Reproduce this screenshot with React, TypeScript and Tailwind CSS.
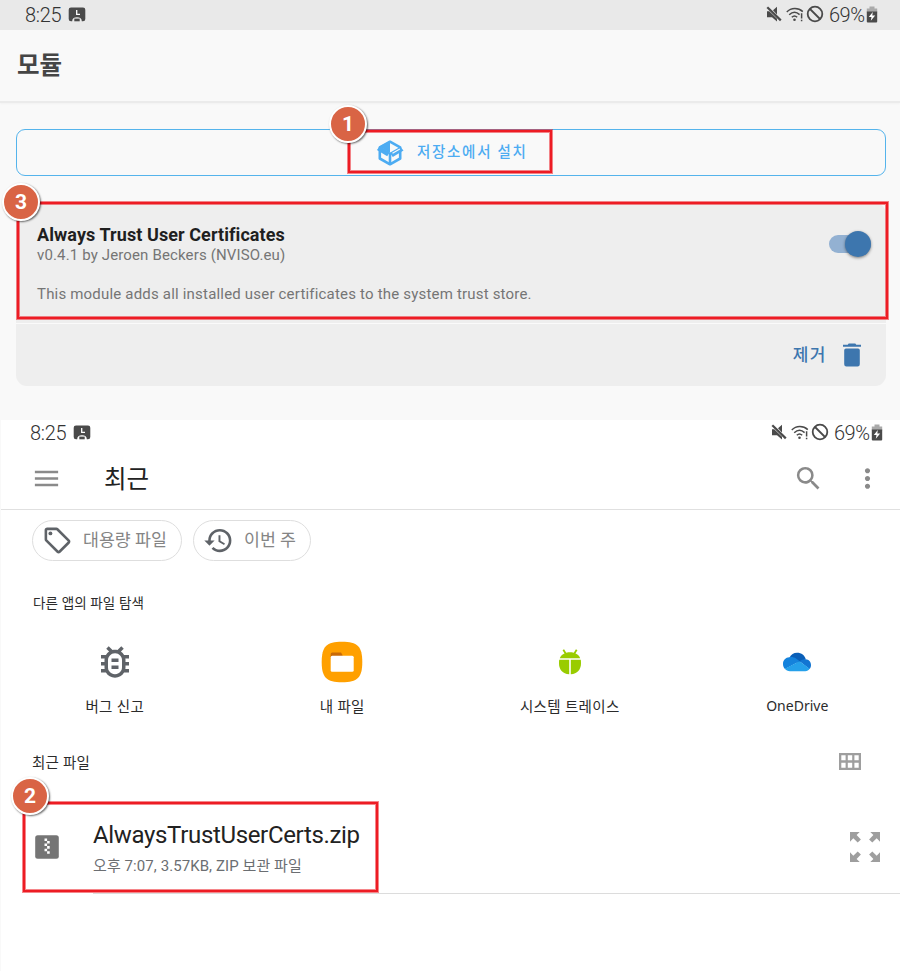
import type { ReactNode } from "react";
import {
  MdHistory,
  MdMenu,
  MdMoreVert,
  MdOutlineBugReport,
  MdOutlineSell,
  MdSearch,
} from "react-icons/md";

function StatusBar({ className }: { className: string }) {
  return (
    <div className={`flex h-[30px] items-center text-[20px] leading-[30px] font-light text-[#333] ${className}`}>
      <span className="w-[43px] tracking-[-0.3px]">8:25</span>
      <svg width="18" height="15" viewBox="0 0 18 15" className="-mt-0.5">
        <path
          d="M3 .5h12a2.300 2.300 0 0 1 2.300 2.300v9.200a2.300 2.300 0 0 1-2.300 2.300h-1.200c0-2.600-1.600-4.100-4.800-4.100s-4.800 1.500-4.800 4.100H3A2.300 2.300 0 0 1 .7 12V2.800A2.300 2.300 0 0 1 3 .5z"
          fill="#4a4a4a"
        />
        <path d="M8.700 3v4.300h3.300" fill="none" stroke="#fff" strokeWidth="1.300" />
        <path d="M6.300 11.600h5.400v2.700H6.300z" fill="#4a4a4a" />
      </svg>
      <div className="ml-auto flex items-center">
        <svg width="16" height="16" viewBox="0 0 16 16" className="mr-[4px] -mt-0.5">
          <path d="M1 5.200h2.200l7.800 7.600v2.600L6 11.200H1zM7 4.300 11 .7v7.900z" fill="#4a4a4a" />
          <path d="M1.300 1.200 14.800 14.400" stroke="#4a4a4a" strokeWidth="2.200" />
        </svg>
        <svg width="18" height="15" viewBox="0 0 18 15" className="mr-[2px] -mt-0.5">
          <g fill="none" stroke="#4a4a4a" strokeWidth="1.500">
            <path d="M.8 5C5.200.4 12.200.4 16.800 4.600" />
            <path d="M3.200 7.800c3.300-3.200 7.200-3.200 10.400-.2" />
            <path d="M5.800 10.300c1.700-1.600 3.700-1.600 5.400 0" />
            <path d="M15.600 6.300v5.200M15.600 12.700v1.600" />
          </g>
          <circle cx="8.500" cy="12.700" r="1.300" fill="#4a4a4a" />
        </svg>
        <svg width="18" height="18" viewBox="0 0 18 18" className="mr-[5px] -mt-0.5">
          <circle cx="9" cy="9" r="7.300" fill="none" stroke="#4a4a4a" strokeWidth="1.800" />
          <path d="m4 4 10 10" stroke="#4a4a4a" strokeWidth="1.800" />
        </svg>
        <span className="w-[37px] tracking-[-0.5px]">69%</span>
        <svg width="12" height="17" viewBox="0 0 12 17" className="-mt-0.5">
          <path d="M3.500.5h5v2h2.700v4H.8v-4h2.700z" fill="#aaa" />
          <path d="M.8 5.500h10.400v10a1 1 0 0 1-1 1H1.800a1 1 0 0 1-1-1z" fill="#4a4a4a" />
          <path d="m6.800 6-4 5h2.700l-.7 3.800 4.400-5.300H6.300z" fill="#fff" />
        </svg>
      </div>
    </div>
  );
}

function Badge({ n, className }: { n: number; className: string }) {
  return (
    <div
      className={`absolute flex size-[38px] items-center justify-center rounded-full border-[2.5px] border-white bg-[#d96445] pt-px text-[21px] leading-none font-bold text-white shadow-[1px_1px_2px_rgba(0,0,0,0.6)] ${className}`}
    >
      {n}
    </div>
  );
}

function Highlight({ className }: { className: string }) {
  return (
    <div
      className={`pointer-events-none absolute border-2 border-[#ed1c24] shadow-[0_0_0_1px_#ed1c2488,inset_0_0_0_1px_#ed1c2488] ${className}`}
    />
  );
}

function BoxIcon() {
  return (
    <svg width="28" height="26" viewBox="0 0 28 26">
      <g fill="none" stroke="#4dacf2" strokeWidth="2.600" strokeLinejoin="round">
        <path d="M3.800 7.300 14 1.700l10.200 5.600v11.200L14 24.300 3.800 18.500z" />
        <path d="M14 12.600v11.600" />
      </g>
      <path d="M3.300 6.600 14 1v11.700z" fill="#4dacf2" />
      <path d="M.9 9.900 3.800 6.300 14 12l-2.800 4.200z" fill="#4dacf2" />
      <path d="m13.800 12.700 10.400-6 3.300 3.900-10.700 6.400z" fill="#4dacf2" />
      <path d="m16.500 13.300 7.300-4.200" stroke="#f9f9f9" strokeWidth="1.200" />
    </svg>
  );
}

function Chip({ icon, label, className }: { icon: ReactNode; label: string; className: string }) {
  return (
    <div
      className={`flex h-[41px] items-center rounded-full border border-[#dedede] text-[17.3px] leading-none text-[#858585] ${className}`}
    >
      {icon}
      <span className="whitespace-nowrap">{label}</span>
    </div>
  );
}

function AppEntry({ icon, label, className }: { icon: ReactNode; label: string; className: string }) {
  return (
    <div className="flex flex-col items-center">
      <div className="flex h-[44px] items-center justify-center">{icon}</div>
      <span
        className={`mt-[12px] font-['Noto_Sans','Noto_Sans_CJK_KR',sans-serif] leading-[20px] whitespace-nowrap text-[#2b2b2b] ${className}`}
      >
        {label}
      </span>
    </div>
  );
}

function FolderIcon() {
  return (
    <svg width="42" height="42" viewBox="0 0 42 42" className="-mt-px">
      <path
        d="M21 .7c15.500 0 20.300 4.800 20.300 20.300S36.500 41.300 21 41.300.7 36.500.7 21 5.500.7 21 .7z"
        fill="#ffa000"
      />
      <path d="M9.700 13a1.500 1.500 0 0 1 1.500-1.500h8.800L21.500 14v4H9.700z" fill="#c96a06" />
      <rect x="9.700" y="14.700" width="23" height="16" rx="1.500" fill="#fff" />
    </svg>
  );
}

function AndroidIcon() {
  return (
    <svg width="24" height="26" viewBox="0 0 24 26" className="-mt-px">
      <g fill="#99cc00">
        <path d="M1.800 9.300C3 5.700 7 3.300 12 3.300s9 2.400 10.200 6z" />
        <path d="M1.200 10.700h10v14.600C4.700 25 1 20.500 1 14.600c0-1.400 0-2.700.2-3.900zM22.800 10.700h-10v14.600C19.300 25 23 20.500 23 14.600c0-1.400 0-2.700-.2-3.900z" />
      </g>
      <path d="m5.300.7 2.500 4M18.700.7l-2.500 4" stroke="#99cc00" strokeWidth="1.800" />
    </svg>
  );
}

function OneDriveIcon() {
  return (
    <svg width="28" height="20" viewBox="0 0 28 20">
      <path d="M6.500 5.500C8 2.500 10.700.7 14 .7c4.500 0 7.800 2.700 8.800 6.600L15 11z" fill="#0a5fb8" />
      <path d="M6.300 5.300c2.700-.5 4.700 0 6.700 1.300l3.700 2.700L2 17C.7 15.700 0 14 0 12c0-3.700 2.700-6.500 6.300-6.700z" fill="#1482dc" />
      <path d="M16.500 9.300c2-1.600 4-2.300 6.300-2 3 .2 5.200 2.600 5.200 5.700 0 1.600-.5 3-1.500 4z" fill="#1275d2" />
      <path d="m1.800 16.800 14.700-7.500 10.200 7.500c-1 1.600-2.500 2.400-4.400 2.400H7c-2.200 0-4-.8-5.200-2.400z" fill="#25a0ea" />
    </svg>
  );
}

function ZipIcon() {
  return (
    <svg width="24" height="24" viewBox="0 0 24 24">
      <rect x=".2" y=".2" width="23.600" height="23.600" rx="2.500" fill="#757575" />
      <path
        d="M9.500 3.500h2.600v2.400H9.500zM12.100 5.900h2.600v2.600h-2.600zM9.500 8.500h2.600v2.600H9.500zM12.100 11.100h2.600v2.600h-2.600zM9.500 13.700h2.600v2.600H9.500zM12.100 16.300h2.600v2.500h-2.600z"
        fill="#fff"
      />
    </svg>
  );
}

function ExpandIcon() {
  return (
    <svg width="30" height="30" viewBox="0 0 30 30" fill="#9e9e9e">
      <path d="M0 0h9.700L6.600 3.100l4.300 4.300-3.200 3.200-4.400-4.300L0 9.700z" />
      <path d="M30 0h-9.700l3.100 3.100-4.300 4.300 3.200 3.200 4.400-4.300L30 9.700z" />
      <path d="M0 30h9.700l-3.100-3.100 4.300-4.300-3.200-3.200-4.400 4.300L0 20.300z" />
      <path d="M30 30h-9.700l3.100-3.100-4.300-4.300 3.200-3.200 4.400 4.300L30 20.300z" />
    </svg>
  );
}

function ModulesScreen() {
  return (
    <section className="flex h-[420px] flex-col bg-[#f9f9f9]">
      <StatusBar className="shrink-0 bg-[#e9e9e9] pr-[22px] pl-[25px]" />
      <header className="flex h-[73px] shrink-0 items-center border-b-2 border-[#ebebeb] pl-[17px] shadow-[0_1px_2px_rgba(0,0,0,0.03)]">
        <h1 className="mt-px text-[24.500px] leading-[36px] font-bold text-[#454545]">모듈</h1>
      </header>
      <div className="mt-[26px] mr-[14px] ml-[16px] flex h-[47px] shrink-0 items-center rounded-[9px] border border-[#55b4ec] pl-[359px]">
        <BoxIcon />
        <span className="mt-px ml-[13px] text-[14.500px] leading-[20px] font-medium tracking-[1.7px] text-[#4dacf2]">
          저장소에서 설치
        </span>
      </div>
      <article className="mt-[27px] mr-[14px] ml-[16px] flex h-[183px] shrink-0 flex-col overflow-hidden rounded-[11px] bg-[#eeeeee]">
        <div className="flex h-[121px] border-b border-[#fafafa] pt-[22px] pl-[21px]">
          <div className="flex flex-col">
            <h2 className="text-[18px] leading-[20px] font-bold tracking-[0.08px] text-[#1f1f1f]">
              Always Trust User Certificates
            </h2>
            <p className="text-[15px] leading-[20px] tracking-[0.14px] text-[#757575]">
              v0.4.1 by Jeroen Beckers (NVISO.eu)
            </p>
            <p className="mt-[19px] text-[15px] leading-[20px] tracking-[0.19px] text-[#757575]">
              This module adds all installed user certificates to the system trust store.
            </p>
          </div>
          <div className="mt-[10px] mr-[15px] ml-auto flex h-[18px] w-[42px] items-center justify-end rounded-full bg-[#93b1d2]">
            <div className="size-[26px] shrink-0 rounded-full bg-[#3d76ae] shadow-[0_1px_3px_rgba(0,0,0,0.45)]" />
          </div>
        </div>
        <div className="flex grow items-center justify-end pr-[25px] text-[#3d76ae]">
          <span className="text-[17px] leading-[20px] font-medium tracking-[1.5px]">제거</span>
          <svg width="18" height="24" viewBox="0 0 18 24" className="ml-[16px]" fill="currentColor">
            <path d="M5.700.5h6.600l1 1.200H18v2H0v-2h4.700z" />
            <path d="M3 5.500h12a1.800 1.800 0 0 1 1.800 1.800v14a2.200 2.200 0 0 1-2.200 2.200H3.400a2.200 2.200 0 0 1-2.200-2.200v-14A1.800 1.800 0 0 1 3 5.500z" />
          </svg>
        </div>
      </article>
    </section>
  );
}

function FilesScreen() {
  return (
    <section className="ml-px flex h-[551px] flex-col bg-white">
      <StatusBar className="-mt-[2px] shrink-0 pr-[17px] pl-[29px]" />
      <header className="flex h-[62px] shrink-0 items-center border-b border-[#e0e0e0] pl-[30px] text-[#8a8a8a]">
        <MdMenu size={31} />
        <h1 className="mt-[2px] ml-[42px] text-[24.500px] leading-[36px] text-[#222]">최근</h1>
        <MdSearch size={31} className="ml-auto" />
        <MdMoreVert size={31} className="mr-[17px] ml-[28px]" />
      </header>
      <div className="mt-[10px] ml-[31px] flex shrink-0 gap-[11px]">
        <Chip
          className="w-[150px] pl-[9px]"
          label="대용량 파일"
          icon={<MdOutlineSell size={31} className="mr-[10px] text-[#5f6368]" />}
        />
        <Chip
          className="w-[118px] pl-[9px]"
          label="이번 주"
          icon={<MdHistory size={31} className="mr-[10px] text-[#5f6368]" />}
        />
      </div>
      <h2 className="mt-[32px] ml-[32px] text-[13.500px] leading-[20px] tracking-[0.15px] text-[#2b2b2b]">
        다른 앱의 파일 탐색
      </h2>
      <div className="mt-[27px] grid w-[910px] grid-cols-4">
        <AppEntry
          className="text-[14.500px] tracking-[0.3px]"
          label="버그 신고"
          icon={<MdOutlineBugReport size={42} color="#5f6368" />}
        />
        <AppEntry className="text-[14.500px] tracking-[0.3px]" label="내 파일" icon={<FolderIcon />} />
        <AppEntry className="text-[14.500px] tracking-[0.3px]" label="시스템 트레이스" icon={<AndroidIcon />} />
        <AppEntry className="text-[14px]" label="OneDrive" icon={<OneDriveIcon />} />
      </div>
      <div className="mt-[37px] flex h-[20px] items-center pr-[39px] pl-[31px]">
        <h2 className="mt-[2px] text-[14.500px] leading-[20px] tracking-[0.2px] text-[#2b2b2b]">최근 파일</h2>
        <svg width="22" height="17" viewBox="0 0 22 17" className="-mt-[3px] ml-auto">
          <path
            fillRule="evenodd"
            fill="#9e9e9e"
            d="M0 0h22v17H0zM2.300 2.300v4.900h4.300V2.300zM8.800 2.300v4.900h4.400V2.300zM15.400 2.300v4.900h4.300V2.300zM2.300 9.700v5h4.300v-5zM8.800 9.700v5h4.400v-5zM15.400 9.700v5h4.300v-5z"
          />
        </svg>
      </div>
      <div className="mt-[28px] flex h-[93px] pl-[34px]">
        <div className="mt-[34px]">
          <ZipIcon />
        </div>
        <div className="ml-[34px] flex grow border-b border-[#dcdcdc]">
          <div className="pt-[20px]">
            <div className="text-[24px] leading-[28px] tracking-[-0.34px] text-[#222]">AlwaysTrustUserCerts.zip</div>
            <div className="mt-[7px] text-[15px] leading-[20px] tracking-[0.08px] text-[#6b6e72]">
              오후 7:07, 3.57KB, ZIP 보관 파일
            </div>
          </div>
          <div className="mt-[31px] mr-[20px] ml-auto">
            <ExpandIcon />
          </div>
        </div>
      </div>
    </section>
  );
}

export default function App() {
  return (
    <main className="relative h-[971px] w-[900px] overflow-hidden bg-[#f9f9f9] font-[Roboto,'Noto_Sans_CJK_KR',sans-serif]">
      <ModulesScreen />
      <FilesScreen />
      <Highlight className="top-[130px] left-[348px] h-[43px] w-[204px]" />
      <Highlight className="top-[202px] left-[17px] h-[117px] w-[871px]" />
      <Highlight className="top-[802px] left-[23px] h-[90px] w-[355px]" />
      <Badge n={1} className="top-[105px] left-[329px]" />
      <Badge n={3} className="top-[183px] left-[2px]" />
      <Badge n={2} className="top-[777px] left-[11px]" />
    </main>
  );
}
